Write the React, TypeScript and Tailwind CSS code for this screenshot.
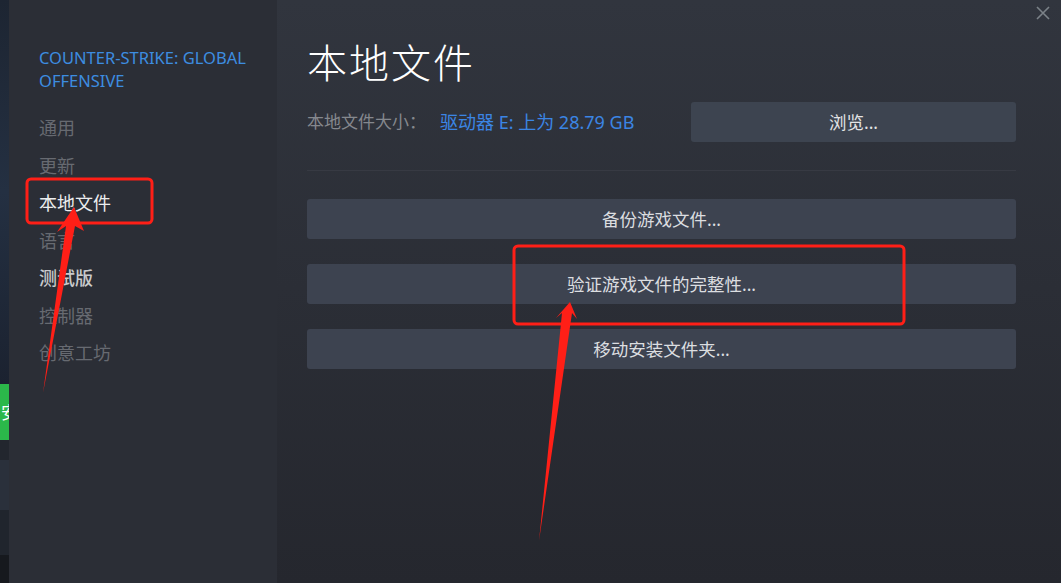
import React from "react";

const menu = [
  { label: "通用", tone: "text-[#676a71]" },
  { label: "更新", tone: "text-[#676a71]" },
  { label: "本地文件", tone: "text-[#ecedee]" },
  { label: "语言", tone: "text-[#676a71]" },
  { label: "测试版", tone: "text-[#c9cacc] font-medium" },
  { label: "控制器", tone: "text-[#676a71]" },
  { label: "创意工坊", tone: "text-[#676a71]" },
];

const actions = ["备份游戏文件...", "验证游戏文件的完整性...", "移动安装文件夹..."];

function Annotations() {
  return (
    <svg className="pointer-events-none absolute inset-0" width="1061" height="583" viewBox="0 0 1061 583">
      <rect x="27" y="179" width="125" height="44" rx="4" fill="none" stroke="#ff1f17" strokeWidth="3" />
      <rect x="514" y="246" width="390" height="78" rx="4" fill="none" stroke="#ff1f17" strokeWidth="3" />
      <polygon points="74,207 84,231 75,226 43,393 66,226 57,232" fill="#ff1f17" />
      <polygon points="570,302 577,319 572,313 539,541 562,313 556,318" fill="#ff1f17" />
    </svg>
  );
}

export default function App() {
  return (
    <div className="relative flex h-[583px] w-[1061px] overflow-hidden bg-[#262930] font-['Noto_Sans','Noto_Sans_CJK_SC',sans-serif]">
      {/* bit of the library window behind the dialog */}
      <div className="flex w-[9px] flex-col">
        <div className="h-[384px] bg-gradient-to-b from-[#1d2532] via-[#243042] to-[#1b2230]" />
        <div className="flex h-[56px] items-center justify-end overflow-hidden bg-[#2bb84a] text-[17px] leading-none text-white">
          <span className="shrink-0 -mr-[9px]">安</span>
        </div>
        <div className="h-[20px] bg-[#22262e]" />
        <div className="h-[50px] bg-[#2a303b]" />
        <div className="h-[45px] bg-[#20252d]" />
        <div className="flex-1 bg-[#16191e]" />
      </div>

      <aside className="flex w-[268px] flex-col bg-[#2b2e36] pl-[30px] pt-[46px]">
        <div className="text-[16.5px] leading-[23px] text-[#3d8de0]">
          COUNTER-STRIKE: GLOBAL
          <br />
          OFFENSIVE
        </div>
        <ul className="mt-[18px] flex flex-col">
          {menu.map((m) => (
            <li key={m.label} className={`h-[37.5px] text-[18px] leading-[37.5px] ${m.tone}`}>
              {m.label}
            </li>
          ))}
        </ul>
      </aside>

      <main className="relative flex flex-1 flex-col bg-gradient-to-b from-[#31353e] to-[#25272e] pl-[30px] pr-[45px] pt-[38px]">
        <button className="absolute right-[10px] top-[5px] text-[#7b8288]">
          <svg width="16" height="16" viewBox="0 0 16 16" fill="none" stroke="currentColor" strokeWidth="1.6">
            <path d="M2 2 L14 14 M14 2 L2 14" />
          </svg>
        </button>

        <h1 className="text-[40px] leading-[50px] tracking-[2px] text-white font-light">本地文件</h1>

        <div className="mt-[14px] flex items-center">
          <span className="w-[133px] text-[17px] text-[#85888e]">本地文件大小：</span>
          <span className="text-[18px] text-[#3b85e4]">驱动器 E: 上为 28.79 GB</span>
          <button className="ml-auto h-[40px] w-[325px] rounded-[3px] bg-[#3d4450] text-[17.5px] text-[#e3e4e6]">
            浏览...
          </button>
        </div>

        <div className="mt-[28px] h-px bg-[#373a43]" />

        <div className="mt-[28px] flex flex-col gap-[25px]">
          {actions.map((a) => (
            <button key={a} className="h-[40px] rounded-[3px] bg-[#3d4350] text-[17.5px] text-[#dcdee0]">
              {a}
            </button>
          ))}
        </div>
      </main>

      <Annotations />
    </div>
  );
}
